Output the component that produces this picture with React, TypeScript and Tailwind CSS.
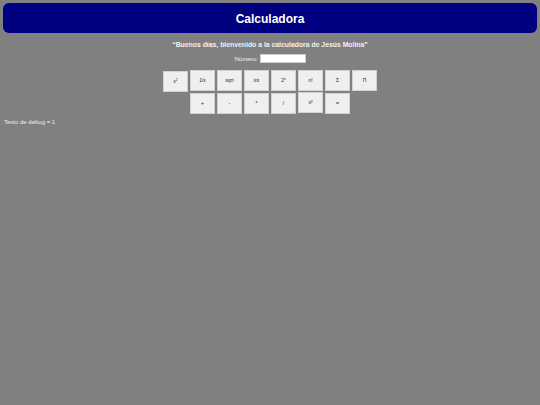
const row1 = [
  { label: 'x', sup: '2' },
  { label: '1/x' },
  { label: 'sqrt' },
  { label: 'int' },
  { label: '2', sup: 'x' },
  { label: 'n!' },
  { label: 'Σ' },
  { label: 'Π' },
];

const row2 = [
  { label: '+' },
  { label: '-' },
  { label: '*' },
  { label: '/' },
  { label: 'x', sup: 'y' },
  { label: '=' },
];

function CalcButton({ label, sup, className = '' }: { label: string; sup?: string; className?: string }) {
  return (
    <button
      className={`w-[25px] h-[21px] flex items-center justify-center bg-[#efefef] border border-[#d2d2d2] text-[#222] text-[5px] leading-none ${className}`}
    >
      {label}
      {sup && <sup className="text-[3.5px] -top-[2px]">{sup}</sup>}
    </button>
  );
}

export default function App() {
  return (
    <div className="min-h-screen bg-[#808080] pt-[3px] font-['Liberation_Sans',Arial,sans-serif]">
      {/* Header */}
      <header className="mx-[3px] h-[30px] pt-[1px] rounded-[6px] bg-[#000080] flex items-center justify-center">
        <h1 className="text-white font-bold text-[12px] leading-none">Calculadora</h1>
      </header>

      <p className="mt-[7px] text-center font-bold text-[6.85px] leading-[9px] text-[#f2f2f2]">
        “Buenos días, bienvenido a la calculadora de Jesús Molina”
      </p>

      <div className="mt-[5px] flex items-center justify-center gap-[2px]">
        <label className="text-[6px] text-[#f0f0f0] leading-none">Número:</label>
        <input type="text" className="w-[46px] h-[9px] bg-white border border-[#cfcfcf] outline-none" />
      </div>

      {/* Buttons */}
      <div className="mt-[7px] flex flex-col items-center gap-px">
        <div className="flex items-start gap-[2px]">
          {row1.map((b, i) => (
            <CalcButton key={i} label={b.label} sup={b.sup} className={i === 0 ? 'mt-[1px] h-[20px]' : ''} />
          ))}
        </div>
        <div className="flex items-start gap-[2px]">
          {row2.map((b, i) => (
            <CalcButton key={i} label={b.label} sup={b.sup} className={i === 4 ? '-mt-px' : ''} />
          ))}
        </div>
      </div>

      <p className="mt-[5px] ml-[4px] text-[6px] text-[#f0f0f0] leading-none">Texto de debug = 1</p>
    </div>
  );
}
